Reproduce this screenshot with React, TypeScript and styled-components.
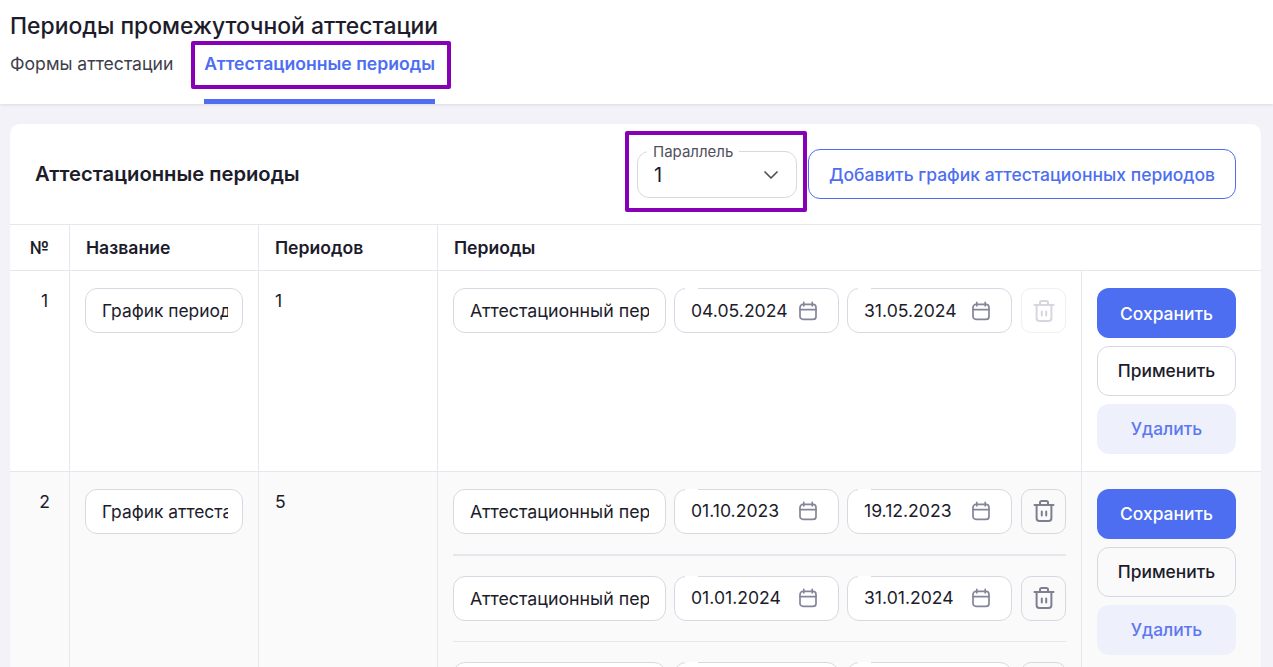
import React from 'react';
import styled, { createGlobalStyle } from 'styled-components';
import { ChevronDown } from 'lucide-react';

const GlobalStyle = createGlobalStyle`
  html, body {
    margin: 0;
    height: 667px;
    overflow: hidden;
    background: #f3f2f8;
    font-family: Inter, 'Noto Sans', sans-serif;
    color: #1c1c2b;
  }
  * {
    box-sizing: border-box;
  }
`;

const Header = styled.header`
  height: 104px;
  background: #fff;
  padding: 14px 10px 0;
  box-shadow: 0 1px 3px rgba(30, 30, 70, 0.1);
`;

const Title = styled.h1`
  margin: 0;
  font-size: 22.9px;
  line-height: 24px;
  font-weight: 500;
  color: #1c1c2b;
`;

const Tabs = styled.nav`
  display: flex;
  gap: 31px;
  margin-top: 13px;
`;

const Tab = styled.div<{ $active?: boolean }>`
  position: relative;
  height: 53px;
  padding-top: 3px;
  font-size: 17.6px;
  line-height: 20px;
  font-weight: ${(p) => (p.$active ? 600 : 400)};
  color: ${(p) => (p.$active ? '#4e6ef2' : '#3e3e4a')};
  border-bottom: ${(p) => (p.$active ? '5px solid #4e6ef2' : 'none')};
`;

const Highlight = styled.div<{ $top: number; $right: number; $bottom: number; $left: number }>`
  position: absolute;
  top: ${(p) => p.$top}px;
  right: ${(p) => p.$right}px;
  bottom: ${(p) => p.$bottom}px;
  left: ${(p) => p.$left}px;
  border: 4px solid #8700b5;
  border-radius: 2px;
  pointer-events: none;
`;

const Card = styled.section`
  margin: 20px 12px 0 10px;
  background: #fff;
  border-radius: 10px 10px 0 0;
`;

const CardHead = styled.div`
  display: flex;
  align-items: center;
  height: 101px;
  padding: 0 25px;
  border-bottom: 1px solid #e6e6ee;
`;

const CardTitle = styled.h2`
  flex: 1;
  margin: 0 0 2px;
  font-size: 20.2px;
  font-weight: 600;
  color: #1c1c2b;
`;

const SelectBox = styled.div`
  position: relative;
  display: flex;
  align-items: center;
  justify-content: space-between;
  width: 160px;
  height: 47px;
  margin: 1px 11px 0 0;
  padding: 1px 13px 0 16px;
  font-size: 20px;
  border: 1px solid #d8d8e3;
  border-radius: 12px;
`;

const SelectLabel = styled.span`
  position: absolute;
  top: -8px;
  left: 9px;
  padding: 0 6px;
  background: #fff;
  font-size: 15px;
  line-height: 16px;
  color: #50505c;
`;

const OutlineButton = styled.button`
  width: 428px;
  height: 50px;
  padding: 0;
  background: #fff;
  border: 1px solid #4e6ef2;
  border-radius: 12px;
  font: 500 17.5px Inter, sans-serif;
  color: #4e6ef2;
`;

const GRID = '60px 189px 179px 644px 179px';

const HeadRow = styled.div`
  display: grid;
  grid-template-columns: ${GRID};
  height: 46px;
  border-bottom: 1px solid #e6e6ee;
`;

const HeadCell = styled.div<{ $center?: boolean; $wide?: boolean }>`
  display: flex;
  align-items: center;
  justify-content: ${(p) => (p.$center ? 'center' : 'flex-start')};
  grid-column: ${(p) => (p.$wide ? 'span 2' : 'auto')};
  padding: 0 16px;
  font-size: 17.6px;
  font-weight: 600;
  border-right: ${(p) => (p.$wide ? 'none' : '1px solid #e6e6ee')};
`;

const Row = styled.div<{ $shaded?: boolean }>`
  display: grid;
  grid-template-columns: ${GRID};
  background: ${(p) => (p.$shaded ? '#fafafa' : '#fff')};
  border-bottom: 1px solid #e6e6ee;
`;

const Cell = styled.div`
  padding: 17px 15px;
  font-size: 17.6px;
  line-height: 26px;
  border-right: 1px solid #e6e6ee;
`;

const NumberCell = styled(Cell)`
  padding-left: 20px;
  padding-right: 10px;
  text-align: center;
`;

const CountCell = styled(Cell)`
  padding-left: 16px;
`;

const ActionCell = styled.div`
  display: flex;
  flex-direction: column;
  gap: 8px;
  padding: 17px 25px 17.4px 15px;
`;

const Field = styled.input<{ $width: number }>`
  display: block;
  flex: none;
  width: ${(p) => p.$width}px;
  height: 45px;
  padding: 0 16px;
  background: #fff;
  border: 1px solid #d8d8e3;
  border-radius: 12px;
  outline: none;
  font: 400 17.8px Inter, sans-serif;
  color: #1c1c2b;
`;

const NameField = styled(Field)`
  padding: 0 14px 0 16px;
  font-size: 17.4px;
`;

const PeriodRow = styled.div<{ $thick?: boolean; $last?: boolean }>`
  display: flex;
  align-items: center;
  gap: 8px;
  padding-bottom: ${(p) => (p.$last ? 0 : '20px')};
  margin-bottom: ${(p) => (p.$last ? 0 : '20px')};
  border-bottom: ${(p) => (p.$last ? 'none' : p.$thick ? '2px solid #e6e6ee' : '1px solid #e6e6ee')};
`;

const DateBox = styled.div`
  position: relative;
  flex: none;
  display: flex;
  align-items: center;
  justify-content: space-between;
  width: 165px;
  height: 45px;
  padding: 0 20px 0 16px;
  background: #fff;
  border: 1px solid #d8d8e3;
  border-radius: 12px;
  font-size: 17.6px;
  &::before {
    content: '';
    position: absolute;
    top: -1px;
    left: 10px;
    width: 13px;
    height: 1px;
    background: #fff;
  }
`;

const IconButton = styled.button<{ $disabled?: boolean }>`
  display: flex;
  align-items: center;
  justify-content: center;
  flex: none;
  width: 45px;
  height: 45px;
  margin-left: 1px;
  padding: 0;
  background: transparent;
  border: 1px solid ${(p) => (p.$disabled ? '#efeff4' : '#d8d8e3')};
  border-radius: 10px;
  color: ${(p) => (p.$disabled ? '#d6d6e0' : '#7f7f92')};
`;

const ActionButton = styled.button<{ $kind: 'primary' | 'plain' | 'soft' }>`
  width: 139px;
  height: ${(p) => (p.$kind === 'plain' ? '49.6px' : '50px')};
  padding: 0;
  border-radius: 12px;
  font: 500 17.4px Inter, sans-serif;
  border: 1px solid ${(p) => (p.$kind === 'plain' ? '#d8d8e3' : 'transparent')};
  background: ${(p) => (p.$kind === 'primary' ? '#4e6ef2' : p.$kind === 'soft' ? '#eef0fc' : 'transparent')};
  color: ${(p) => (p.$kind === 'primary' ? '#fff' : p.$kind === 'soft' ? '#5d78f0' : '#1c1c2b')};
`;

const CalendarIcon = () => (
  <svg width="20" height="20" viewBox="0 0 20 20" fill="none" stroke="#85859a" strokeWidth="1.7" strokeLinecap="round">
    <rect x="2" y="3.4" width="16" height="15" rx="3" />
    <path d="M2 8.6h16M5.800 1.400v3.400M14.200 1.400v3.400" />
  </svg>
);

const TrashIcon = () => (
  <svg width="22" height="24" viewBox="0 0 22 24" fill="none" stroke="currentColor" strokeWidth="2" strokeLinecap="round" strokeLinejoin="round">
    <path d="M1.5 6h19M7 6V3.600C7 2.700 7.700 2 8.600 2h4.800c.9 0 1.600.7 1.600 1.600V6" />
    <path d="M3.600 6v13.200C3.600 20.800 4.800 22 6.400 22h9.200c1.600 0 2.800-1.200 2.800-2.800V6" />
    <path d="M8.800 12.500v4M13.200 12.500v4" />
  </svg>
);

interface Period {
  name: string;
  from: string;
  to: string;
}

interface Schedule {
  num: number;
  title: string;
  count: number;
  periods: Period[];
}

const NAME = 'Аттестационный период';

const schedules: Schedule[] = [
  {
    num: 1,
    title: 'График периодов',
    count: 1,
    periods: [{ name: NAME, from: '04.05.2024', to: '31.05.2024' }],
  },
  {
    num: 2,
    title: 'График аттестации',
    count: 5,
    periods: [
      { name: NAME, from: '01.10.2023', to: '19.12.2023' },
      { name: NAME, from: '01.01.2024', to: '31.01.2024' },
      { name: '', from: '', to: '' },
    ],
  },
];

export default function App() {
  return (
    <>
      <GlobalStyle />
      <Header>
        <Title>Периоды промежуточной аттестации</Title>
        <Tabs>
          <Tab>Формы аттестации</Tab>
          <Tab $active>
            Аттестационные периоды
            <Highlight $top={-10} $right={-16} $bottom={10} $left={-13} />
          </Tab>
        </Tabs>
      </Header>
      <Card>
        <CardHead>
          <CardTitle>Аттестационные периоды</CardTitle>
          <SelectBox>
            <SelectLabel>Параллель</SelectLabel>
            1
            <ChevronDown size={24} color="#50505c" strokeWidth={1.7} />
            <Highlight $top={-21} $right={-11} $bottom={-15} $left={-13} />
          </SelectBox>
          <OutlineButton>Добавить график аттестационных периодов</OutlineButton>
        </CardHead>
        <HeadRow>
          <HeadCell $center>№</HeadCell>
          <HeadCell>Название</HeadCell>
          <HeadCell>Периодов</HeadCell>
          <HeadCell $wide>Периоды</HeadCell>
        </HeadRow>
        {schedules.map((s, i) => (
          <Row key={s.num} $shaded={i % 2 === 1}>
            <NumberCell>{s.num}</NumberCell>
            <Cell>
              <NameField $width={158} readOnly value={s.title} />
            </Cell>
            <CountCell>{s.count}</CountCell>
            <Cell>
              {s.periods.map((p, j) => (
                <PeriodRow key={j} $thick={j === 0} $last={j === s.periods.length - 1}>
                  <Field $width={213} readOnly value={p.name} />
                  <DateBox>
                    {p.from}
                    <CalendarIcon />
                  </DateBox>
                  <DateBox>
                    {p.to}
                    <CalendarIcon />
                  </DateBox>
                  <IconButton $disabled={s.periods.length === 1}>
                    <TrashIcon />
                  </IconButton>
                </PeriodRow>
              ))}
            </Cell>
            <ActionCell>
              <ActionButton $kind="primary">Сохранить</ActionButton>
              <ActionButton $kind="plain">Применить</ActionButton>
              <ActionButton $kind="soft">Удалить</ActionButton>
            </ActionCell>
          </Row>
        ))}
      </Card>
    </>
  );
}
